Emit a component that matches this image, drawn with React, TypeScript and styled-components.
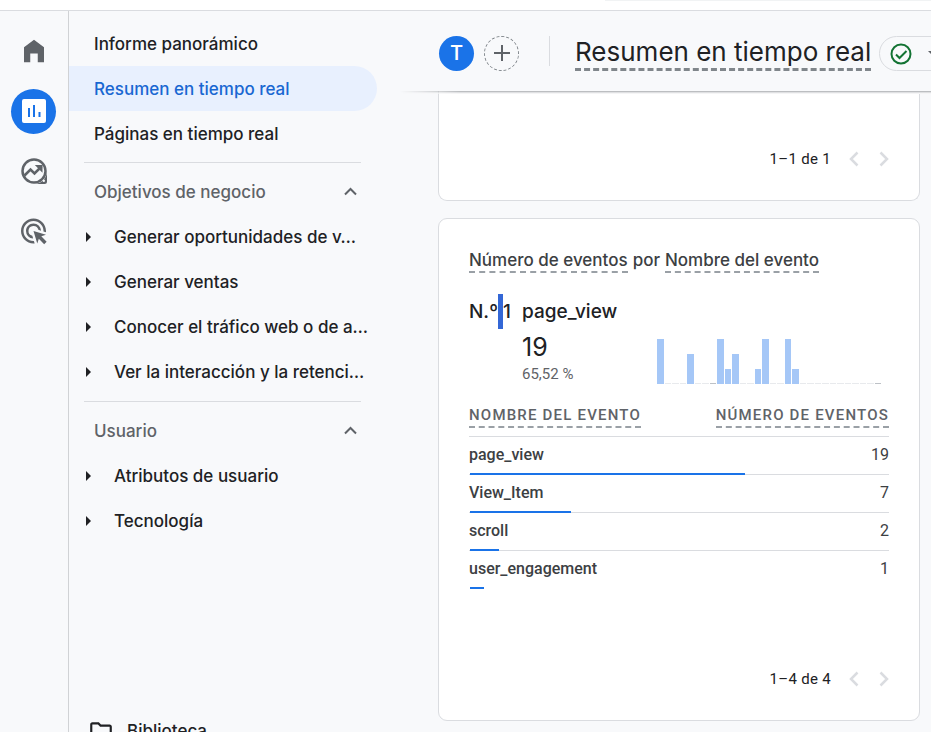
import React from "react";
import styled, { createGlobalStyle } from "styled-components";

const GlobalStyle = createGlobalStyle`
  *, *::before, *::after { box-sizing: border-box; }
  body { margin: 0; overflow: hidden; background: #f8f9fb; color: #202124; font-family: Inter, sans-serif; }
  button, a { font: inherit; color: inherit; }
  button { padding: 0; border: 0; background: none; cursor: pointer; }
  a { text-decoration: none; }
  h1, h2, p, ul { margin: 0; padding: 0; font-weight: inherit; }
  ul { list-style: none; }
  svg { display: block; flex: none; }
`;

const Page = styled.div`
  display: flex;
  flex-direction: column;
  height: 100vh;
  overflow: hidden;
`;

const TopBar = styled.div`
  flex: none;
  display: flex;
  justify-content: flex-end;
  height: 11px;
  background: #fff;
  border-bottom: 1px solid #dadce0;
`;

const SearchEdge = styled.div`
  width: 35%;
  height: 1px;
  background: #f1f3f4;
`;

const Body = styled.div`
  flex: 1;
  min-height: 0;
  display: flex;
`;

const Rail = styled.nav`
  flex: none;
  width: 69px;
  padding: 18px 0 0 11px;
  display: flex;
  flex-direction: column;
  gap: 15px;
  border-right: 1px solid #d0d2d5;
  color: #5f6368;
`;

const RailLink = styled.a<{ $active?: boolean }>`
  display: flex;
  align-items: center;
  justify-content: center;
  width: 45px;
  height: 45px;
  padding-bottom: 1px;
  border-radius: 50%;
  background: ${(p) => (p.$active ? "#1a73e8" : "transparent")};
`;

const SideNav = styled.nav`
  flex: none;
  width: 331px;
  padding-top: 10px;
  overflow: hidden;
  font-size: 17px;
  font-weight: 500;
`;

const NavLink = styled.a<{ $active?: boolean }>`
  display: flex;
  align-items: center;
  height: 45px;
  margin-right: 23px;
  padding-left: 25px;
  border-radius: 0 23px 23px 0;
  background: ${(p) => (p.$active ? "#e8f0fe" : "transparent")};
  color: ${(p) => (p.$active ? "#1967d2" : "#202124")};
`;

const NavSection = styled.section`
  padding-top: 6px;
  & + & { padding-top: 7px; }
`;

const Divider = styled.hr`
  height: 1px;
  margin: 0 39px 6px 15px;
  border: 0;
  background: #dadce0;
`;

const SectionButton = styled.button`
  display: flex;
  align-items: center;
  justify-content: space-between;
  width: 100%;
  height: 45px;
  padding: 0 43px 0 25px;
  color: #5f6368;
`;

const GroupButton = styled.button`
  display: flex;
  align-items: center;
  gap: 22px;
  width: 100%;
  height: 45px;
  padding-left: 17px;
  white-space: nowrap;
`;

const LibraryLink = styled.a`
  display: flex;
  align-items: center;
  gap: 13px;
  height: 45px;
  margin-top: 165px;
  padding-left: 19px;
`;

const Main = styled.main`
  flex: 1;
  min-width: 0;
  display: flex;
  flex-direction: column;
`;

const Header = styled.header`
  flex: none;
  display: flex;
  align-items: flex-start;
  height: 80px;
  padding: 25px 0 0 39px;
  overflow: hidden;
`;

const HeaderEdge = styled.div`
  flex: none;
  height: 3px;
  margin-bottom: -3px;
  z-index: 1;
  background: linear-gradient(#bcbec1 0 1px, #dfe0e2 1px 2px, #f5f5f6 2px 3px);
  mask-image: linear-gradient(90deg, transparent, #000 60px);
`;

const Segment = styled.button`
  flex: none;
  width: 35px;
  height: 35px;
  padding-bottom: 1px;
  border-radius: 50%;
  background: #1a73e8;
  color: #fff;
  font-family: Roboto, sans-serif;
  font-size: 20px;
  font-weight: 500;
`;

const AddSegment = styled.button`
  flex: none;
  display: flex;
  align-items: center;
  justify-content: center;
  width: 35px;
  height: 35px;
  margin-left: 10px;
  padding-bottom: 1px;
  border: 1px dashed #80868b;
  border-radius: 50%;
`;

const HeaderRule = styled.div`
  flex: none;
  width: 1px;
  height: 30px;
  margin: 0 25px 0 30px;
  background: #dadce0;
`;

const Title = styled.h1`
  flex: none;
  font-size: 26px;
  line-height: 32px;
  border-bottom: 3px dashed #80868b;
  white-space: nowrap;
`;

const StatusButton = styled.button`
  flex: none;
  display: flex;
  align-items: center;
  gap: 16px;
  width: 76px;
  height: 35px;
  margin-left: 8px;
  padding-left: 10px;
  border: 1px solid #dadce0;
  border-radius: 18px;
`;

const Cards = styled.div`
  flex: 1;
  min-height: 0;
  padding: 0 11px 0 38px;
  overflow: hidden;
`;

const Card = styled.section<{ $scrolled?: boolean }>`
  display: flex;
  flex-direction: column;
  height: ${(p) => (p.$scrolled ? "110px" : "503px")};
  padding: 30px;
  padding-bottom: 26px;
  background: #fff;
  border: 1px solid #dadce0;
  border-radius: 9px;
  ${(p) => p.$scrolled && "border-top: 0; border-top-left-radius: 0; border-top-right-radius: 0; margin-bottom: 17px;"}
`;

const CardTitle = styled.h2`
  display: flex;
  gap: 5px;
  color: #3c4043;
  font-size: 17px;
  font-weight: 500;
  line-height: 22px;
  white-space: nowrap;
`;

const Term = styled.span`
  border-bottom: 2px dashed #9aa0a6;
`;

const Leader = styled.div`
  display: grid;
  grid-template-columns: 53px 1fr auto;
  margin-top: 21px;
  color: #202124;
`;

const Rank = styled.div`
  display: flex;
  align-items: center;
  height: 35px;
  font-size: 19px;
  font-weight: 500;
`;

const SelectedSpace = styled.span`
  width: 5px;
  height: 35px;
  background: #3367d6;
`;

const LeaderName = styled(Rank)`
  grid-column: 2 / 4;
`;

const LeaderFigures = styled.div`
  grid-column: 2;
`;

const Count = styled.p`
  font-size: 25px;
  line-height: 36px;
`;

const Share = styled.p`
  color: #5f6368;
  font: 15px/18px Roboto, sans-serif;
`;

const Chart = styled.div`
  display: flex;
  align-items: flex-end;
  gap: 1px;
  width: 224px;
  height: 45px;
  margin: 10px 8px 0 0;
`;

const ChartBar = styled.span<{ $tone: string }>`
  flex: 1;
  background: ${(p) => p.$tone};
`;

const Table = styled.table`
  width: 100%;
  margin-top: 21px;
  border-collapse: separate;
  border-spacing: 0;
  color: #3c4043;
  font: 16px/20px Roboto, sans-serif;
`;

const HeadCell = styled.th<{ $end?: boolean }>`
  height: 32px;
  padding: 0;
  border-bottom: 1px solid #dadce0;
  color: #5f6368;
  font-size: 15px;
  font-weight: 500;
  letter-spacing: 0.08em;
  text-align: ${(p) => (p.$end ? "right" : "left")};
  vertical-align: top;
`;

const HeadTerm = styled.span`
  display: inline-block;
  height: 23px;
  border-bottom: 2px dashed #9aa0a6;
  text-transform: uppercase;
`;

const Row = styled.tr`
  position: relative;
  height: 38px;
  &:not(:last-child) > * { border-bottom: 1px solid #dadce0; }
`;

const NameCell = styled.th`
  padding: 0 0 2px;
  font-weight: 500;
  text-align: left;
`;

const ValueCell = styled.td`
  padding: 0 0 2px;
  text-align: right;
`;

const RowBar = styled.span`
  position: absolute;
  left: 1px;
  bottom: 0;
  height: 2px;
  background: #1a73e8;
`;

const Pager = styled.div`
  display: flex;
  align-items: center;
  justify-content: flex-end;
  height: 30px;
  margin-top: auto;
  font: 15px/20px Roboto, sans-serif;
`;

const PagerText = styled.span`
  margin-right: 8px;
  letter-spacing: 0.02em;
`;

const PageButton = styled.button`
  display: flex;
  align-items: center;
  justify-content: center;
  width: 30px;
  height: 30px;
  color: #dadce0;
  &:last-child { margin-right: -10px; }
`;

const HomeIcon = () => (
  <svg width="30" height="30" viewBox="0 0 24 24" fill="currentColor" aria-hidden="true">
    <path d="M4 21V9l8-6 8 6v12h-5v-7h-6v7z" />
  </svg>
);

const ReportsIcon = () => (
  <svg width="31" height="30" viewBox="0 0 31 30" aria-hidden="true">
    <rect x="4" y="3" width="24" height="24" rx="2" fill="#fff" />
    <path d="M11 12v9M16 9v12M21.500 16v5" stroke="#1a73e8" strokeWidth="2" />
  </svg>
);

const ExploreIcon = () => (
  <svg width="30" height="30" viewBox="0 0 30 30" fill="none" stroke="currentColor" strokeWidth="2.500" aria-hidden="true">
    <path d="M28 15v10.500a2.500 2.500 0 0 1-2.500 2.500H15a13 13 0 0 0 13-13z" fill="currentColor" stroke="none" />
    <circle cx="15" cy="15" r="11.500" fill="#f8f9fb" />
    <path d="M5.500 19.500l6-6 4 4 7-7" />
    <path d="M15.800 9h7.700v7.700z" fill="currentColor" stroke="none" />
    <circle cx="24.800" cy="24.800" r="1.200" fill="#f8f9fb" stroke="none" />
  </svg>
);

const AdsIcon = () => (
  <svg width="31" height="30" viewBox="0 0 24 24" fill="currentColor" aria-hidden="true">
    <path d="M11.710 17.990A5.993 5.993 0 0 1 6 12c0-3.310 2.690-6 6-6 3.220 0 5.840 2.530 5.990 5.710l-2.100-.630a3.999 3.999 0 1 0-4.810 4.810l.630 2.100zM22 12c0 .300-.010.600-.040.900l-1.970-.590c.010-.100.010-.210.010-.310 0-4.420-3.580-8-8-8s-8 3.580-8 8 3.580 8 8 8c.100 0 .210 0 .310-.010l.590 1.970c-.300.030-.600.040-.900.040-5.520 0-10-4.480-10-10S6.480 2 12 2s10 4.480 10 10zm-3.770 4.260L22 15l-10-3 3 10 1.260-3.770 4.270 4.270 1.980-1.980-4.280-4.260z" />
  </svg>
);

const ChevronUp = () => (
  <svg width="13" height="14" viewBox="0 0 13 14" fill="none" stroke="#5f6368" strokeWidth="2" aria-hidden="true">
    <path d="M1 9.500L6.500 4 12 9.500" />
  </svg>
);

const Triangle = () => (
  <svg width="6" height="10" viewBox="0 0 6 10" fill="#202124" aria-hidden="true">
    <path d="M0 0l5 5-5 5z" />
  </svg>
);

const FolderIcon = () => (
  <svg width="26" height="26" viewBox="0 0 24 24" fill="currentColor" aria-hidden="true">
    <path d="M9.170 6l2 2H20v10H4V6h5.170M10 4H4c-1.100 0-1.990.900-1.990 2L2 18c0 1.100.900 2 2 2h16c1.100 0 2-.900 2-2V8c0-1.100-.900-2-2-2h-8l-2-2z" />
  </svg>
);

const PlusIcon = () => (
  <svg width="16" height="16" viewBox="0 0 16 16" stroke="#5f6368" strokeWidth="2" aria-hidden="true">
    <path d="M8 0v16M0 8h16" />
  </svg>
);

const CheckIcon = () => (
  <svg width="22" height="22" viewBox="0 0 22 22" fill="none" stroke="#137333" strokeWidth="2" aria-hidden="true">
    <circle cx="11" cy="11" r="9.500" />
    <path d="M6 11.500l3.500 3.500 7-7" />
  </svg>
);

const Caret = () => (
  <svg width="10" height="5" viewBox="0 0 10 5" fill="#5f6368" aria-hidden="true">
    <path d="M0 0h10L5 5z" />
  </svg>
);

const Arrow = ({ d }: { d: string }) => (
  <svg width="12" height="16" viewBox="0 0 12 16" fill="none" stroke="currentColor" strokeWidth="2.500" aria-hidden="true">
    <path d={d} />
  </svg>
);

const sections = [
  {
    title: "Objetivos de negocio",
    groups: ["Generar oportunidades de v…", "Generar ventas", "Conocer el tráfico web o de a…", "Ver la interacción y la retenci…"],
  },
  { title: "Usuario", groups: ["Atributos de usuario", "Tecnología"] },
];

const events = [
  { name: "page_view", count: 19 },
  { name: "View_Item", count: 7 },
  { name: "scroll", count: 2 },
  { name: "user_engagement", count: 1 },
];
const total = events.reduce((sum, e) => sum + e.count, 0);

const perMinute = [3, 0, 0, 0, 2, 0, 0, 0, 3, 1, 2, 0, 0, 1, 3, 0, 0, 3, 1, 0, 0, 0, 0, 0, 0, 0, 0, 0, 0, 0];
const tickMinutes = [7, 29];

const barTone = (value: number, minute: number) =>
  value ? "#a5c7f7" : tickMinutes.includes(minute) ? "#bdc1c6" : "#e8eaed";

const Pagination = ({ label }: { label: string }) => (
  <Pager>
    <PagerText>{label}</PagerText>
    <PageButton aria-label="Anterior"><Arrow d="M9.500 1.500L3 8l6.500 6.500" /></PageButton>
    <PageButton aria-label="Siguiente"><Arrow d="M2.500 1.500L9 8l-6.500 6.500" /></PageButton>
  </Pager>
);

export default function App() {
  return (
    <Page>
      <GlobalStyle />
      <TopBar><SearchEdge /></TopBar>
      <Body>
        <Rail>
          <RailLink href="#inicio" aria-label="Inicio"><HomeIcon /></RailLink>
          <RailLink href="#informes" aria-label="Informes" $active><ReportsIcon /></RailLink>
          <RailLink href="#explorar" aria-label="Explorar"><ExploreIcon /></RailLink>
          <RailLink href="#publicidad" aria-label="Publicidad"><AdsIcon /></RailLink>
        </Rail>
        <SideNav>
          <NavLink href="#panoramico">Informe panorámico</NavLink>
          <NavLink href="#resumen" $active>Resumen en tiempo real</NavLink>
          <NavLink href="#paginas">Páginas en tiempo real</NavLink>
          {sections.map((s) => (
            <NavSection key={s.title}>
              <Divider />
              <SectionButton>{s.title}<ChevronUp /></SectionButton>
              <ul>
                {s.groups.map((g) => (
                  <li key={g}><GroupButton><Triangle />{g}</GroupButton></li>
                ))}
              </ul>
            </NavSection>
          ))}
          <LibraryLink href="#biblioteca"><FolderIcon />Biblioteca</LibraryLink>
        </SideNav>
        <Main>
          <Header>
            <Segment>T</Segment>
            <AddSegment aria-label="Añadir comparación"><PlusIcon /></AddSegment>
            <HeaderRule />
            <Title>Resumen en tiempo real</Title>
            <StatusButton aria-label="Estado de los datos"><CheckIcon /><Caret /></StatusButton>
          </Header>
          <HeaderEdge />
          <Cards>
            <Card $scrolled><Pagination label="1–1 de 1" /></Card>
            <Card>
              <CardTitle><Term>Número de eventos</Term>por<Term>Nombre del evento</Term></CardTitle>
              <Leader>
                <Rank>N.º<SelectedSpace />1</Rank>
                <LeaderName>page_view</LeaderName>
                <LeaderFigures>
                  <Count>19</Count>
                  <Share>65,52 %</Share>
                </LeaderFigures>
                <Chart role="img" aria-label="Eventos por minuto">
                  {perMinute.map((v, i) => (
                    <ChartBar key={i} $tone={barTone(v, i)} style={{ height: v ? v * 15 : 1 }} />
                  ))}
                </Chart>
              </Leader>
              <Table>
                <thead>
                  <tr>
                    <HeadCell scope="col"><HeadTerm>Nombre del evento</HeadTerm></HeadCell>
                    <HeadCell scope="col" $end><HeadTerm>Número de eventos</HeadTerm></HeadCell>
                  </tr>
                </thead>
                <tbody>
                  {events.map((e) => (
                    <Row key={e.name}>
                      <NameCell scope="row">
                        {e.name}
                        <RowBar style={{ width: `${(e.count / total) * 100}%` }} />
                      </NameCell>
                      <ValueCell>{e.count}</ValueCell>
                    </Row>
                  ))}
                </tbody>
              </Table>
              <Pagination label="1–4 de 4" />
            </Card>
          </Cards>
        </Main>
      </Body>
    </Page>
  );
}
